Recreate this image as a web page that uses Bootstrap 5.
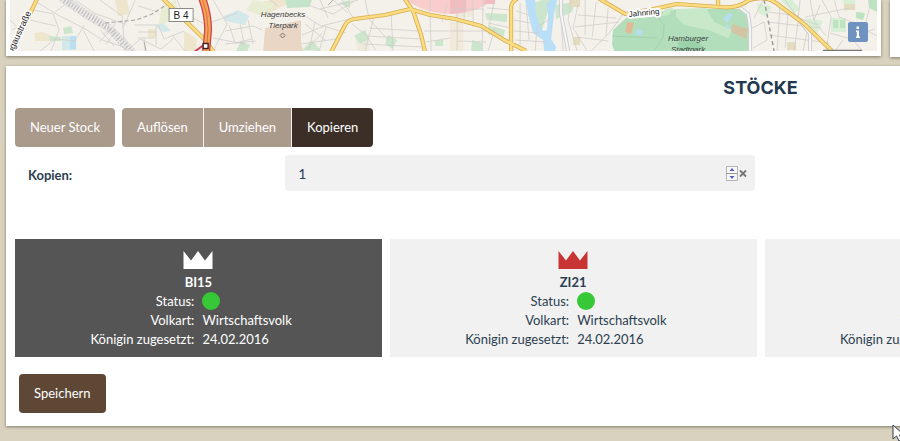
<!DOCTYPE html>
<html lang="de">
<head>
<meta charset="utf-8">
<meta name="viewport" content="width=device-width, initial-scale=1">
<title>Stöcke</title>
<link rel="stylesheet" href="https://cdn.jsdelivr.net/npm/bootstrap@5.3.0/dist/css/bootstrap.min.css">
<style>
html, body { overflow: hidden; }
body { background: #d8d2bf; color: #2c3e50; font: 13px/19px Lato, sans-serif; min-height: 100vh; }
/* the desktop sheet extends past the right edge of a small window */
.sheet { width: 169%; padding: 0 6px; }
.panel { background: #fff; box-shadow: 0 1px 3px rgba(70, 65, 45, .6); }
.top-panels { gap: 9px; margin-bottom: 9px; }
.map-panel { width: 58%; padding: 0 4px 5px; }
.side-panel { height: 57px; }
.map-drawing { display: block; width: 100%; }
.info-btn { position: absolute; right: 13px; top: 22px; width: 20px; height: 20px; background: #7092c0; border: 0; border-radius: 2px; padding: 0; }
.info-btn svg, .crown { display: block; }
.hives { padding: 12px 9px 13px; }
.hives h2 { font: 700 18px/20px Inter, sans-serif; color: #22384f; margin: 0 0 10px; }
.btn { --bs-btn-font-size: 13px; --bs-btn-line-height: 19px; --bs-btn-padding-x: 15px; --bs-btn-padding-y: 10px; --bs-btn-border-width: 0; --bs-btn-border-radius: 4px; --bs-btn-color: #fff; --bs-btn-hover-color: #fff; --bs-btn-active-color: #fff; }
.btn-sand { --bs-btn-bg: #a99a8c; --bs-btn-hover-bg: #99897a; --bs-btn-active-bg: #3b2f27; }
.btn-earth { --bs-btn-bg: #5e4835; --bs-btn-hover-bg: #4d3a2a; --bs-btn-active-bg: #3b2f27; }
.toolbar { gap: 7px; }
.toolbar .btn-group > .btn + .btn { margin-left: 0; border-left: 1px solid #f4f1ee; }
.copies { --bs-gutter-x: 30px; margin: 8px -15px 43px 5px; }
.copies label { padding-left: 8px; font-weight: 700; line-height: 41px; }
.copies .form-control { height: 36px; background: #f1f1f1; border: 0; border-radius: 3px; color: #2c3e50; font-size: 14px; padding: 0 40px 0 13px; appearance: textfield; -moz-appearance: textfield; }
.copies .form-control::-webkit-inner-spin-button { display: none; }
.field-tools { position: absolute; right: 8px; top: 11px; gap: 1px; }
.field-tools button { background: none; border: 0; padding: 0; }
.field-tools svg { display: block; }
.hive-grid { display: grid; grid-template-columns: repeat(4, 1fr); gap: 8px; }
.hive { background: #f1f1f1; padding: 12px 0 8px; }
.hive.selected { background: #555; color: #fff; }
.hive h3 { font-size: 13px; line-height: 19px; font-weight: 700; margin: 4px 0 0; }
.crown { width: 30px; height: 18px; margin: 0 auto; fill: #c83434; }
.selected .crown { fill: #fff; }
.facts { display: grid; grid-template-columns: 1fr 1fr; column-gap: 8px; margin: 0; }
.facts dt { font-weight: 400; text-align: right; white-space: nowrap; }
.facts dd { margin: 0; }
.state { display: block; width: 18px; height: 18px; border-radius: 50%; background: #37c837; }
.save { margin: 17px 0 0 4px; }
.pointer { position: absolute; right: -6px; bottom: -1px; }
</style>
<script src="https://cdn.jsdelivr.net/npm/bootstrap@5.3.0/dist/js/bootstrap.bundle.min.js"></script>
</head>
<body class="position-relative">
<div class="sheet">
  <div class="top-panels d-flex align-items-start">
    <section class="map-panel panel position-relative flex-shrink-0" aria-label="Karte">
      <svg class="map-drawing" viewBox="10 0 867 51" role="img" aria-label="Stadtplan Hamburg">
        <rect x="10" width="867" height="51" fill="#f4f1eb"/>
        <!-- parks, water and built-up areas -->
        <path fill="#eee5cd" d="M115 0h12l3 14-12 2zM184 31l13 8-2 12h-11zM250 5l20-5h25l-32 16zM148 29h8v9h-8zM34 33l8-1 10 4 5 5h-22z"/>
        <path fill="#f0eadb" d="M355 34h14v17h-12zM455 0h17v17h-17zM450 22h13v29h-13z"/>
        <path fill="#e8ecd2" d="M162 5l14-5 2 16-20 10zM253 0l22 4-13 12-16-6z"/>
        <path fill="#c3e4c8" d="M285 0h27l-3 7-22 1z"/>
        <path fill="#cbe6cc" d="M63 28l8-2 2 7-9 1zM49 36l12 1v4H50zM354 36l11-6 4 9-9 5zM388 35l9 5-5 9-7-5zM435 40h8v6h-8zM485 13l22 1v8l-20-2zM488 25l17 5-2 8-15-4zM530 4l12-4h10l-12 35zM555 5l20-3-3 10-16 7zM241 41l9 4-3 6h-11zM338 3l12-3v8zM472 40l10 3v8h-11zM302 50l10-10 9 11z"/>
        <path fill="#d3e8e8" d="M62 36h14v14H62zM224 16l14-6 11 6-4 9-20-4zM155 26l8-3 8 8-8 1z"/>
        <path fill="#b8e0f0" d="M70 36h6v13h-6z"/>
        <path fill="#e9d6c5" d="M265 28l10-2 26-6v24l2 7h-40z"/>
        <circle cx="450" cy="-62" r="76" fill="#f8cdcb"/>
        <path fill="#f2bdc0" d="M450 0h16v12l-16 2zM484 0h11v4h-11z"/>
        <path fill="#b9dff8" d="M525 0h10l1 16 7 15 4-1 1-16-2-10 5-4h6l-3 14-3 25 5 8-1 4h-11l-1-11-10-7-4-15z"/>
        <path fill="#b2debb" d="M627 17l50-8 48 0 15 0 8 8 3 34H614l-2-7 1-14z"/>
        <path fill="#c8e8ca" d="M676 9l30-1 8 14 18 8-4 8-20-8-24-5-8-8zM665 9l8-1-4 7-8 1z"/>
        <path fill="#9bd2a9" d="M678 42l16-4 9 9-7 4h-17z"/>
        <path fill="#e0b996" d="M627 22l7 1-3 11-6-2z"/>
        <path fill="#d3c5a4" d="M732 24l16 5-2 10-15-7z"/>
        <path fill="#b5dfef" d="M637 29l6 2-2 5-6-2zM723 18l6-5 4 2-6 8zM725 24l5 3-3 2z"/>
        <path fill="#d8eed5" d="M757 3l15 4-7 9-7-3zM806 18l17 3-6 12-10-4zM780 0h12l8 9-6 4zM843 0h12v9l-10 2zM831 18h15v14h-15z"/>
        <path fill="#bce4c0" d="M833 20h5v8h-5zM840 20h5v8h-5zM856 12l9 1-2 7-7-2zM868 0h9v12l-8-4z"/>
        <path fill="#e5dcc0" d="M787 42h9v8h-9zM844 4h11v6h-11zM573 37h7v8h-7zM569 0h11v7h-11z"/>
        <!-- side streets -->
        <g fill="none" stroke="#d0cecb" stroke-width=".8">
          <path d="M38 3l18 11 31 16 15 10 25 8M33 10l20 4 6 16-8 21M12 30l18-10 26 6M40 51l15-12 20 2 9-16M75 0l21 14 29 10M100 0l22 16 2 26M135 0l-12 28M127 51l13-12 21 10 12-10M103 35l13-12M99 42l13-13M106 44l10-14M100 30l14 16"/>
          <path d="M10 20l9 9-6 19M55 12l16-12M83 30l11 21M138 6l20 6M145 51l-1-12M134 25h24l6 14 20-8M138 32h18M138 38h16M156 27v18M177 0l5 12 22 12M172 35l13 16M213 0l14 24-14 27M212 22l25-9M213 38l31 6"/>
          <path d="M225 31l28-5 9 4M229 25l6 18 17-4M240 24l4 20M248 20l5 24M225 44l31-3M270 0l8 6M305 16l16 10 33-8M302 35l22-9 22 7M305 24l20 16M315 22l-6 28M326 27l-7 24M301 44l35-5M305 51l17-18M320 0l8 18M308 5l25 9 20-12M320 9l38-9M353 18l-11-18M333 0l15 13"/>
          <path d="M352 24l14 11 10 16M365 0l4 19 19 21M374 17l-9 34M391 14l2 37M369 28l50 3M367 36l54 3M363 44l60 3M430 15l1 36M424 31h25M426 42l24-4M447 4l-5 18M430 0v12"/>
          <path d="M457 0v50M464 0v22M473 0v27M483 0l-1 51M494 2l-5 24M450 9h34M450 31h45M458 41l28 1M487 8l25 2M488 23l23 5M495 28l-7 23M516 11l13 4M514 20l16 3M514 31l24 2M515 40l32 2M520 3v42M526 5l3 35M560 0l3 51M571 0l-3 20 9 31M578 4l-5 24 14 23M578 15l38 3M575 27l44-5M585 0v35M596 2l-4 35M608 8l-2 28M623 14l-13 18-19 19M577 37l31 4M535 51l2-24 13-8"/>
          <path d="M752 28l12-6 3 18-14 8M767 22l54 6M769 35l60 8M780 3l-3 48M788 13l-3 35M798 21l-4 30M808 27l-5 24M768 12l24 3M763 0l-9 18M785 0l12 17 20 8M800 0l-2 18M810 0l4 21 12 15M820 5l-6 15M805 17l45-9M822 0l9 17-5 34M834 0l5 17 16 6M830 33l17 5 28-9M843 40l-8 11M854 41l8 10M871 0l-5 22M867 31l10 5"/>
          <path stroke="#9bcfa6" d="M655 14l9 11-1 12-9 14M612 36l45 2"/>
        </g>
        <path d="M561 0v14l7 37M740 8l8 6 2 14v23M796 16l14 18v17" fill="none" stroke="#cfcfd1" stroke-width="4"/>
        <path d="M561 0v14l7 37M740 8l8 6 2 14v23M796 16l14 18v17" fill="none" stroke="#f6f6f6" stroke-width="2"/>
        <!-- railways -->
        <path d="M62-2l24 16 23 14 23 24" fill="none" stroke="#c2c2c4" stroke-width="8" stroke-dasharray="1.6 1.4"/>
        <path d="M59 0l25 17 24 14 21 20M66-2l26 16 20 13 23 24" fill="none" stroke="#e2e1df" stroke-width="2" stroke-dasharray="4 2"/>
        <path d="M105 23l31-3 16-6 14-9" fill="none" stroke="#aaa" stroke-width="1.2" stroke-dasharray="4 2.5"/>
        <path d="M764 0l4 20 6 31" fill="none" stroke="#999" stroke-width="1.4" stroke-dasharray="4 3"/>
        <path d="M144 42l2 9M333 0l-5 5" fill="none" stroke="#aaa"/>
        <!-- main roads -->
        <g fill="none" stroke-linejoin="round">
          <path stroke="#d5ac55" stroke-width="4.2" d="M37-1L10 55M162-2l43 42 10 14M331 52l13-25q3-7 10-8l31-4 25-6 20 6 25 4 26 7 23 14 22 11M404-2l9 13 8 24 4 17M511 52V7q0-5 7-9M598-2l27 16 28-5 24-5 43 3q17 2 29-7 16-5 27 3l27 20 33 32M718-2v7"/>
          <path stroke="#fbdc7f" stroke-width="2.6" d="M37-1L10 55M162-2l43 42 10 14M331 52l13-25q3-7 10-8l31-4 25-6 20 6 25 4 26 7 23 14 22 11M404-2l9 13 8 24 4 17M511 52V7q0-5 7-9M598-2l27 16 28-5 24-5 43 3q17 2 29-7 16-5 27 3l27 20 33 32M718-2v7"/>
          <path d="M194 52l11-8" stroke="#cf4252" stroke-width="2"/>
          <path d="M202-2q6 16 6 32l-2 22" stroke="#c94352" stroke-width="8"/>
          <path d="M202-2q6 16 6 32l-2 22" stroke="#f4a650" stroke-width="5.4"/>
          <path d="M202-2q6 16 6 32l-2 22" stroke="#dc6a50" stroke-width="1"/>
        </g>
        <rect x="203" y="43.500" width="5" height="5" fill="#fff" stroke="#3c211e" stroke-width="1.4"/>
        <!-- labels -->
        <rect x="169" y="8.500" width="24" height="13" fill="#fff" stroke="#8b8b84"/>
        <g font-family="Liberation Sans, Arial, sans-serif" fill="#222">
          <text x="181" y="18.500" font-size="10" text-anchor="middle">B 4</text>
          <text x="12" y="54" font-size="9" transform="rotate(-65 12 54)" stroke="#fff" stroke-width="3" paint-order="stroke">ogaustraße</text>
          <text x="629" y="17" font-size="8" transform="rotate(-6 629 17)" stroke="#fff" stroke-width="4" stroke-linejoin="round" paint-order="stroke">Jahnring</text>
          <g font-size="8" font-style="italic" text-anchor="middle" fill="#3c403e">
            <text x="283" y="17">Hagenbecks</text><text x="283" y="28">Tierpark</text>
            <text x="688" y="41">Hamburger</text><text x="688" y="52">Stadtpark</text>
          </g>
        </g>
        <path d="M282.500 33l2.500 2.500-2.500 2.500-2.500-2.500z" fill="none" stroke="#77706a"/>
        <path d="M823 50.500h39" stroke="#777" stroke-width="1.300"/>
      </svg>
      <button class="info-btn" type="button" aria-label="Info"><svg width="20" height="20" viewBox="0 0 20 20" fill="#fff"><path d="M8.500 4.500h2.500v2.500H8.500zM8 8.500h3v6h1V16H8v-1.500h.8V10H8z"/></svg></button>
    </section>
    <section class="side-panel panel flex-grow-1" aria-label="Details"></section>
  </div>

  <main class="hives panel">
    <h2 class="text-center">STÖCKE</h2>
    <div class="toolbar d-flex">
      <button class="btn btn-sand" type="button">Neuer Stock</button>
      <div class="btn-group" role="group" aria-label="Aktion">
        <button class="btn btn-sand" type="button">Auflösen</button>
        <button class="btn btn-sand" type="button">Umziehen</button>
        <button class="btn btn-sand active" type="button" aria-pressed="true">Kopieren</button>
      </div>
    </div>
    <form>
      <div class="copies row">
        <label class="col-2" for="copies">Kopien:</label>
        <div class="col-4">
          <div class="position-relative">
            <input class="form-control" id="copies" type="number" value="1" min="1">
            <div class="field-tools d-flex">
              <button type="button" aria-label="Wert ändern"><svg width="12" height="15" viewBox="0 0 12 15"><path fill="#f8f8f8" stroke="#b4b4b4" d="M.5.500h11v14H.5z"/><path stroke="#999" d="M0 7.500h12"/><path fill="#4b62b8" d="M3.500 5L6 2l2.500 3zM3.500 10L6 13l2.500-3z"/></svg></button>
              <button type="button" aria-label="Leeren"><svg width="8" height="15" viewBox="0 0 8 15"><path stroke="#777" stroke-width="1.800" d="M1 4.500l6 6M7 4.500l-6 6"/></svg></button>
            </div>
          </div>
        </div>
      </div>
      <div class="hive-grid">
        <article class="hive selected">
          <svg class="crown" viewBox="0 0 30 18"><path d="M.5 0L8 9.500 15 0l7 9.500L29.500 0v18H.5z"/></svg>
          <h3 class="text-center">BI15</h3>
          <dl class="facts"><dt>Status:</dt><dd><span class="state"></span></dd><dt>Volkart:</dt><dd>Wirtschaftsvolk</dd><dt>Königin zugesetzt:</dt><dd>24.02.2016</dd></dl>
        </article>
        <article class="hive">
          <svg class="crown" viewBox="0 0 30 18"><path d="M.5 0L8 9.500 15 0l7 9.500L29.500 0v18H.5z"/></svg>
          <h3 class="text-center">ZI21</h3>
          <dl class="facts"><dt>Status:</dt><dd><span class="state"></span></dd><dt>Volkart:</dt><dd>Wirtschaftsvolk</dd><dt>Königin zugesetzt:</dt><dd>24.02.2016</dd></dl>
        </article>
        <article class="hive">
          <svg class="crown" viewBox="0 0 30 18"><path d="M.5 0L8 9.500 15 0l7 9.500L29.500 0v18H.5z"/></svg>
          <h3 class="text-center">&nbsp;</h3>
          <dl class="facts"><dt>Status:</dt><dd><span class="state"></span></dd><dt>Volkart:</dt><dd></dd><dt>Königin zugesetzt:</dt><dd></dd></dl>
        </article>
      </div>
      <button class="btn btn-earth save" type="submit">Speichern</button>
    </form>
  </main>
</div>
<svg class="pointer" width="14" height="18" viewBox="0 0 14 18" aria-hidden="true"><path d="M1 1v14l3.500-3 2.500 5 2.500-1-2-5H12z" fill="#fff" stroke="#333b4c"/></svg>
</body>
</html>
